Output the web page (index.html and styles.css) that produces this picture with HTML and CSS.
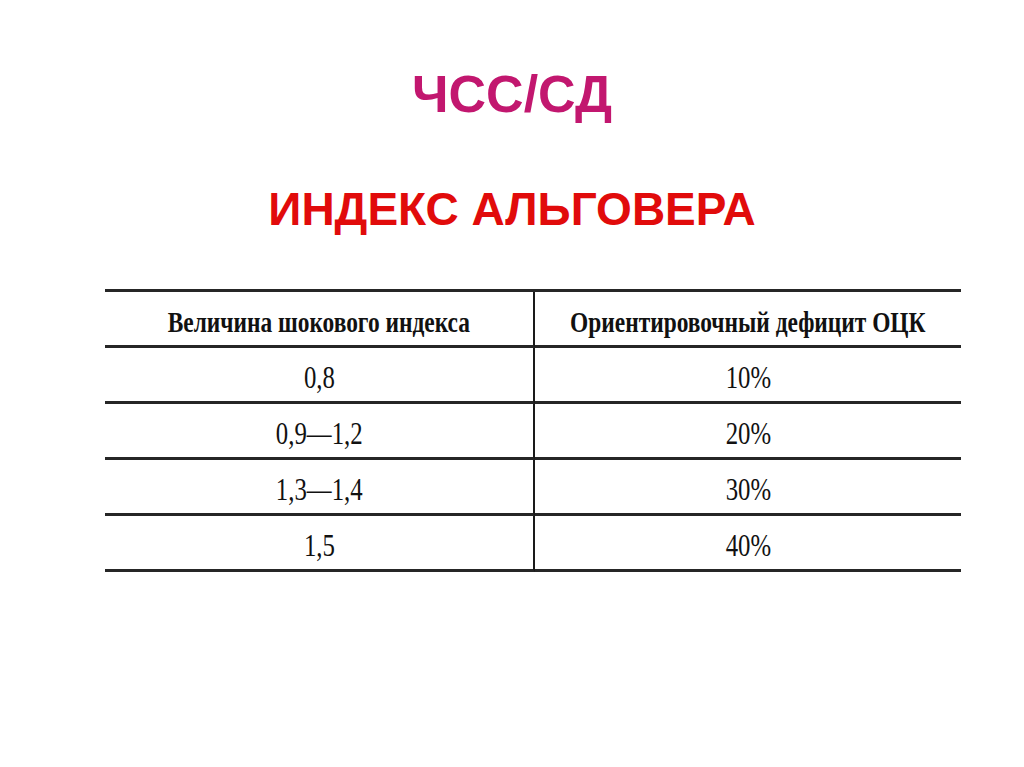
FILE: index.html
```html
<!DOCTYPE html>
<html lang="ru">
<head>
<meta charset="utf-8">
<link rel="stylesheet" href="styles.css">
</head>
<body>
<div class="slide">
  <h1 class="title">ЧСС/СД</h1>
  <h2 class="subtitle">ИНДЕКС АЛЬГОВЕРА</h2>
  <div class="table">
    <div class="cell head left"><span class="sq">Величина шокового индекса</span></div>
    <div class="cell head"><span class="sq">Ориентировочный дефицит ОЦК</span></div>
    <div class="cell left"><span class="sq">0,8</span></div>
    <div class="cell"><span class="sq">10%</span></div>
    <div class="cell left"><span class="sq">0,9—1,2</span></div>
    <div class="cell"><span class="sq">20%</span></div>
    <div class="cell left"><span class="sq">1,3—1,4</span></div>
    <div class="cell"><span class="sq">30%</span></div>
    <div class="cell left"><span class="sq">1,5</span></div>
    <div class="cell"><span class="sq">40%</span></div>
  </div>
</div>
</body>
</html>
```

FILE: styles.css
```css
html, body {
  margin: 0;
  padding: 0;
  background: #ffffff;
}

.slide {
  width: 1024px;
  height: 767px;
  padding-top: 68px;
  box-sizing: border-box;
  font-family: "Liberation Sans", Arial, sans-serif;
}

.title {
  margin: 0;
  font-size: 52px;
  line-height: 52px;
  font-weight: bold;
  color: #c2176f;
  text-align: center;
}

.subtitle {
  margin: 66px 0 0 0;
  font-size: 46px;
  line-height: 46px;
  font-weight: bold;
  color: #e10b0b;
  text-align: center;
}

.table {
  margin: 57px 0 0 105px;
  width: 856px;
  display: grid;
  grid-template-columns: 430px 426px;
  border-top: 3px solid #262626;
  font-family: "Liberation Serif", "Times New Roman", serif;
  color: #111;
}

.cell {
  height: 53px;
  border-bottom: 3px solid #262626;
  box-sizing: content-box;
  display: flex;
  justify-content: center;
  font-size: 31px;
  line-height: 47px;
}

.cell .sq {
  display: inline-block;
  padding-top: 6px;
  transform: scaleX(0.8);
  white-space: nowrap;
}

.cell.left {
  border-right: 2px solid #1a1a1a;
}

.cell.head {
  font-size: 30px;
  font-weight: bold;
}

.cell.head .sq {
  transform: scaleX(0.78);
}
```
